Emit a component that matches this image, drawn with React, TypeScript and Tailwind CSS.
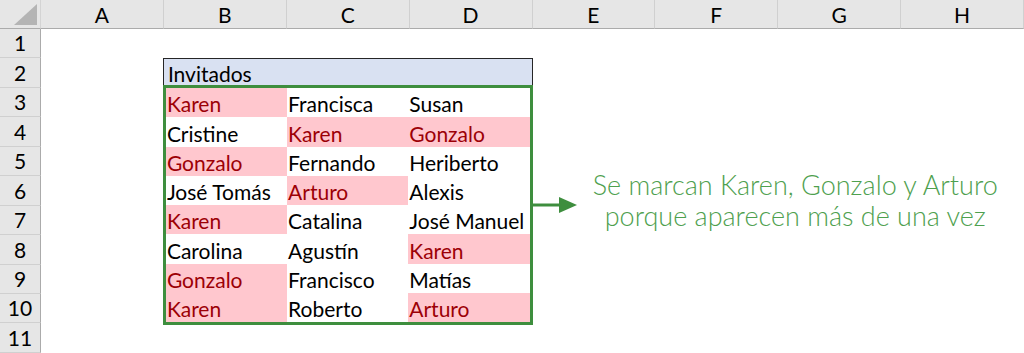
const COLS = ["A", "B", "C", "D", "E", "F", "G", "H"];
const ROWS = [1, 2, 3, 4, 5, 6, 7, 8, 9, 10, 11];

// [name, duplicated]
const GUESTS: [string, boolean][][] = [
  [["Karen", true], ["Francisca", false], ["Susan", false]],
  [["Cristine", false], ["Karen", true], ["Gonzalo", true]],
  [["Gonzalo", true], ["Fernando", false], ["Heriberto", false]],
  [["José Tomás", false], ["Arturo", true], ["Alexis", false]],
  [["Karen", true], ["Catalina", false], ["José Manuel", false]],
  [["Carolina", false], ["Agustín", false], ["Karen", true]],
  [["Gonzalo", true], ["Francisco", false], ["Matías", false]],
  [["Karen", true], ["Roberto", false], ["Arturo", true]],
];

const cellFont = "font-['Lato','Liberation_Sans',sans-serif] text-[21px]";

export default function App() {
  return (
    <div className="grid h-[353px] w-[1024px] grid-cols-[41px_repeat(8,122.875px)] grid-rows-[29px_repeat(11,29.45px)] overflow-hidden bg-white text-black">
      {/* corner */}
      <div className="relative col-start-1 row-start-1 border-b border-r border-b-[#ababab] border-r-[#d4d4d4] bg-[#e6e6e6]">
        <div className="absolute bottom-[3px] right-[3px] h-0 w-0 border-b-[21px] border-l-[23px] border-b-[#b4b4b4] border-l-transparent" />
      </div>

      {/* column headers */}
      {COLS.map((c) => (
        <div
          key={c}
          className={`row-start-1 flex items-center justify-center border-b border-r border-b-[#ababab] border-r-[#d0d0d0] bg-[#e6e6e6] pt-px ${cellFont}`}
        >
          {c}
        </div>
      ))}

      {/* row headers */}
      {ROWS.map((r) => (
        <div
          key={r}
          style={{ gridRowStart: r + 1 }}
          className={`col-start-1 flex items-center justify-center border-b border-r border-b-[#d0d0d0] border-r-[#ababab] bg-[#e6e6e6] ${cellFont}`}
        >
          {r}
        </div>
      ))}

      {/* title row */}
      <div className={`col-span-3 col-start-3 row-start-3 -ml-px flex items-end border-x border-t border-[#262626] bg-[#d9e1f2] pl-[4px] leading-[28px] ${cellFont}`}>
        Invitados
      </div>

      {/* guest list with green outline */}
      <div className="relative z-10 col-span-3 col-start-3 row-span-8 row-start-4 -mb-[2px] -ml-px -mt-[3px] grid grid-cols-3 grid-rows-8 border-[3px] border-[#3e8e3e] bg-white">
        {GUESTS.flat().map(([name, dup], i) => (
          <div
            key={i}
            className={`flex items-end pl-[1px] leading-[27px] ${cellFont} ${dup ? "bg-[#ffc7ce] text-[#9c0006]" : ""}`}
          >
            {name}
          </div>
        ))}
      </div>

      {/* arrow */}
      <div className="col-start-6 row-span-2 row-start-7 flex items-center">
        <svg width="46" height="20" viewBox="0 0 46 20" className="-mt-[1px]">
          <line x1="0" y1="10" x2="28" y2="10" stroke="#3e8e3e" strokeWidth="3" />
          <polygon points="26,2 44,10 26,18" fill="#3e8e3e" />
        </svg>
      </div>

      {/* note */}
      <div className="col-span-4 col-start-6 row-span-2 row-start-7 -mt-[12px] flex flex-col items-center justify-center pl-[34px] text-center font-['Lato','Open_Sans',sans-serif] text-[27px] font-light leading-[31px] text-[#4ea04e]">
        <span>Se marcan Karen, Gonzalo y Arturo</span>
        <span>porque aparecen más de una vez</span>
      </div>
    </div>
  );
}
